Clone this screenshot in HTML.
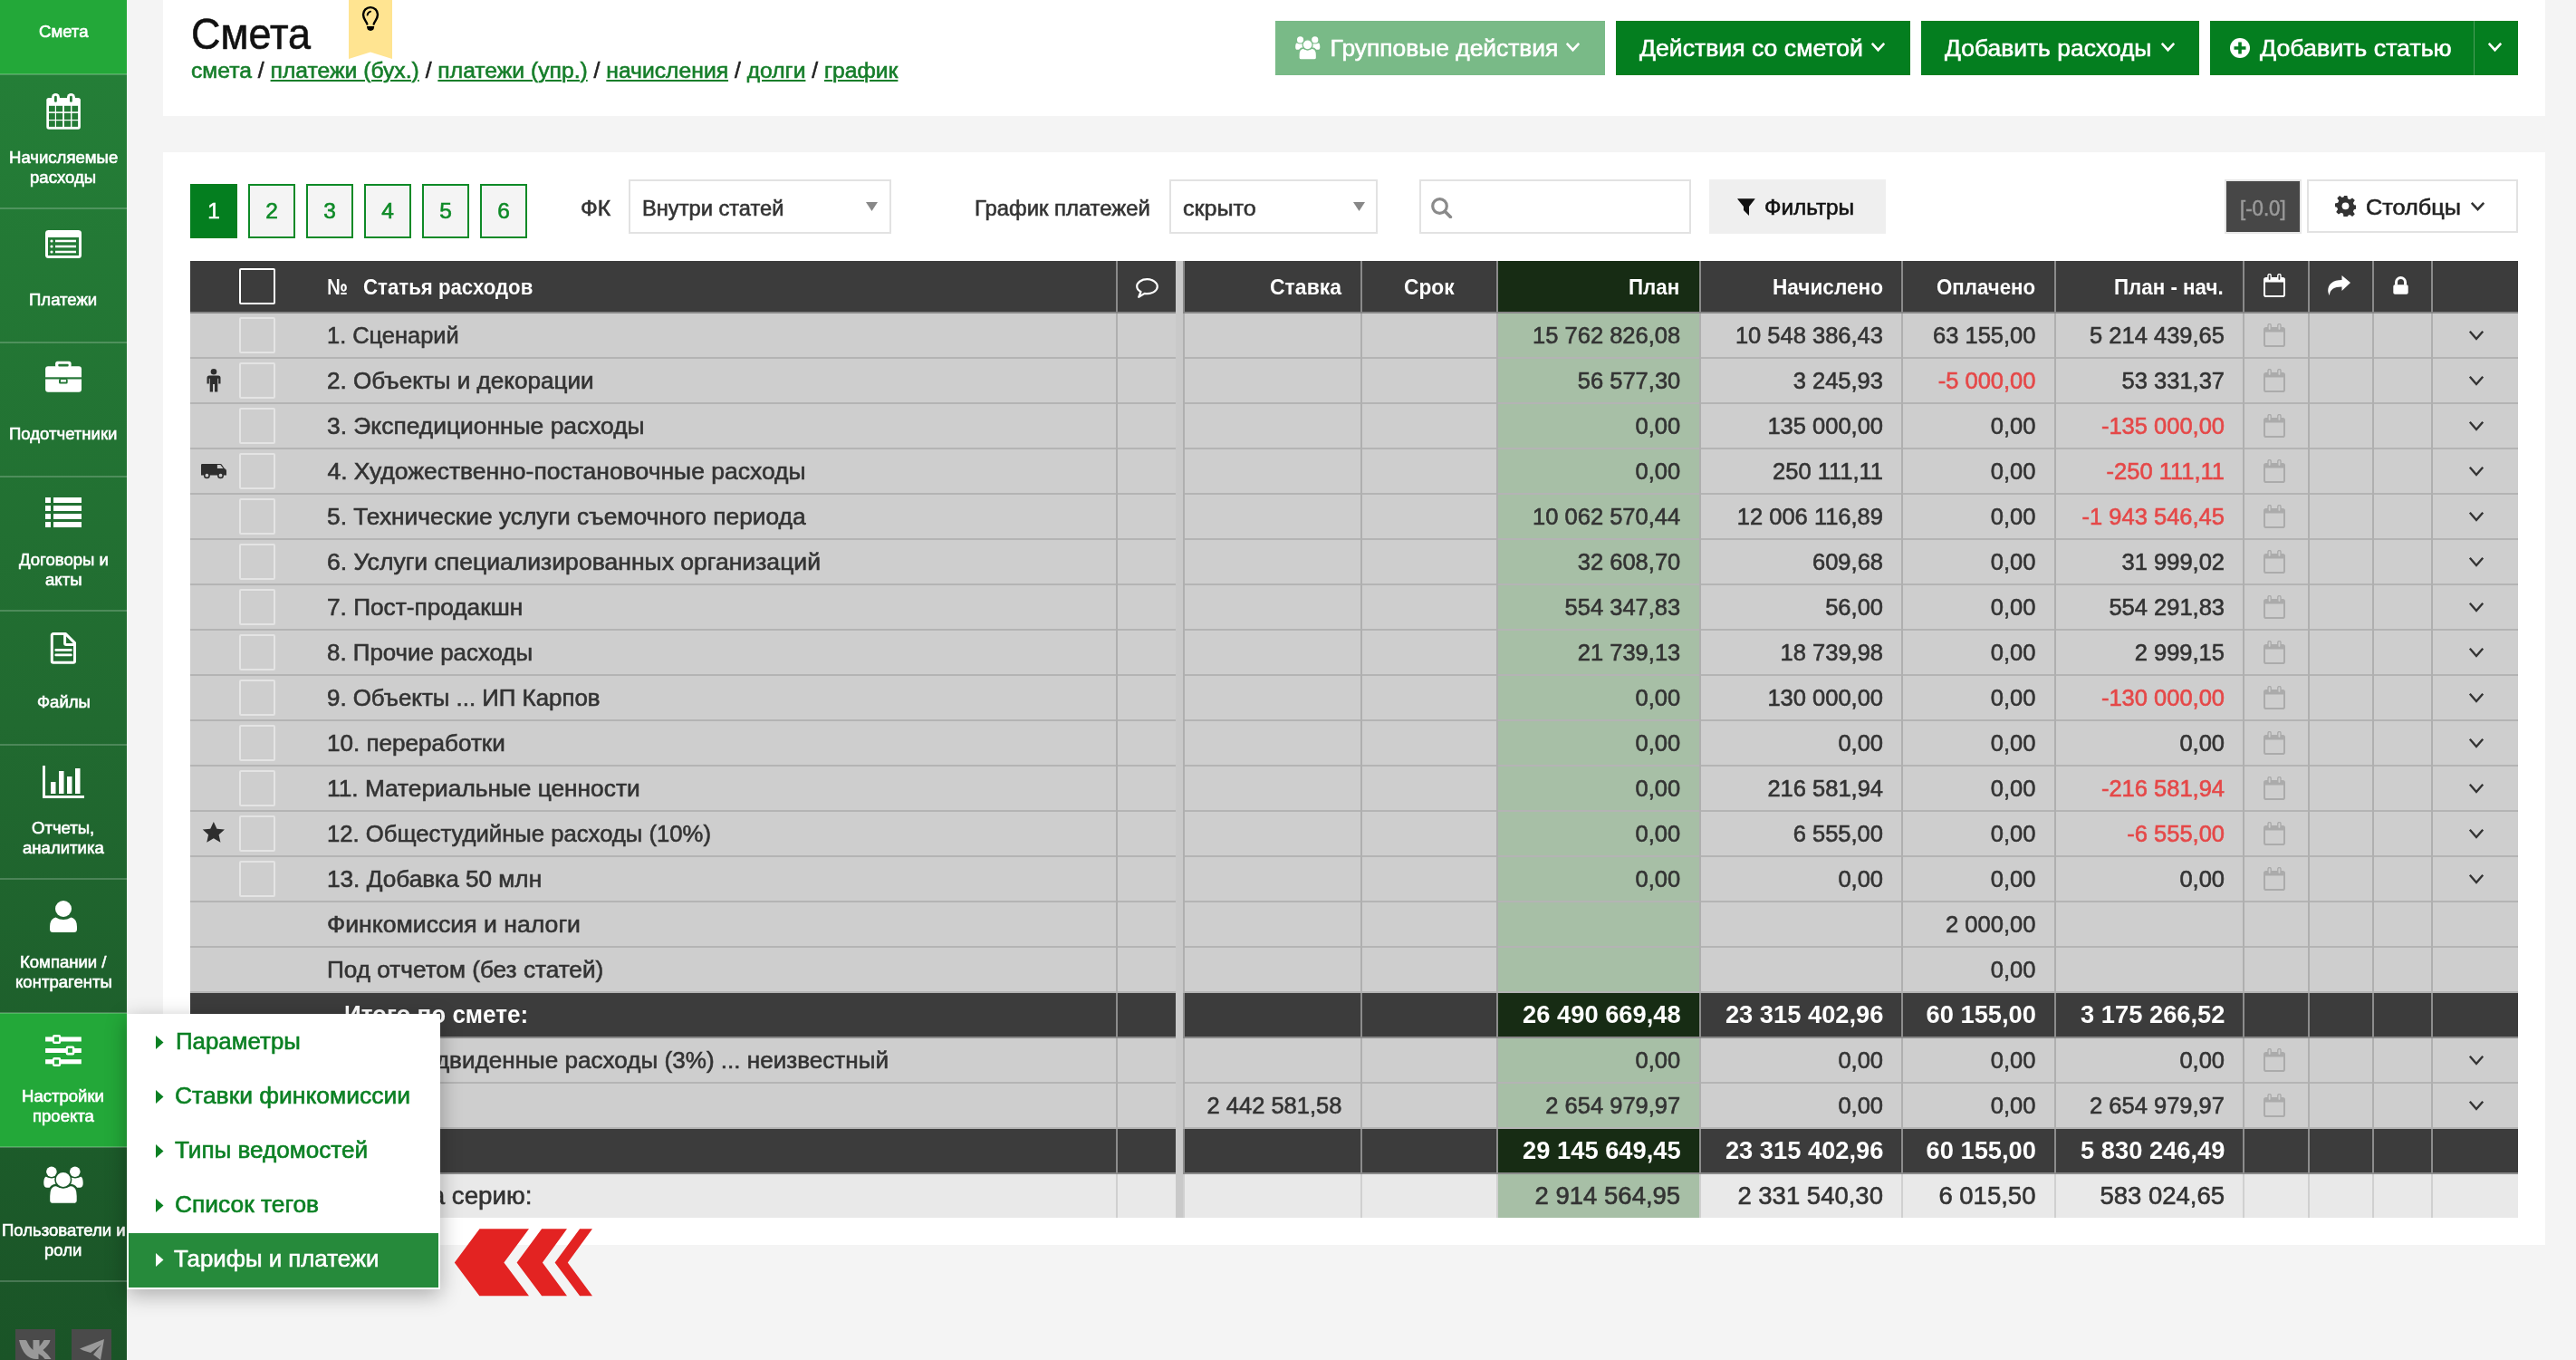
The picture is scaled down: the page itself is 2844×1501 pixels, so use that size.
<!DOCTYPE html>
<html><head><meta charset="utf-8">
<style>
*{margin:0;padding:0;box-sizing:border-box}
html,body{width:2844px;height:1501px;overflow:hidden;background:#f4f4f4;font-family:"Liberation Sans",sans-serif;color:#333}
.t{position:absolute;white-space:nowrap;line-height:60px;transform-origin:0 0;-webkit-text-stroke:0.6px currentColor}
#wrap{position:absolute;left:0;top:0;width:2844px;height:1501px;will-change:transform}
.r{position:absolute}
svg{position:absolute;display:block}
#sb .t{color:#fff;-webkit-text-stroke:0.6px #fff}
.u{text-decoration:underline;text-decoration-thickness:2px;text-underline-offset:2px}
</style></head><body><div id="wrap">

<div class="r" style="left:0;top:0;width:140px;height:1501px;background:linear-gradient(#247e37 82px,#216a30 800px,#1a5427 1501px)"></div>
<div class="r" style="left:0;top:0;width:140px;height:82px;background:#23a839"></div>
<div class="r" style="left:0;top:1118px;width:140px;height:148px;background:#23a839"></div>
<div class="r" style="left:0;top:81px;width:140px;height:2px;background:rgba(255,255,255,0.2)"></div>
<div class="r" style="left:0;top:229px;width:140px;height:2px;background:rgba(255,255,255,0.2)"></div>
<div class="r" style="left:0;top:377px;width:140px;height:2px;background:rgba(255,255,255,0.2)"></div>
<div class="r" style="left:0;top:525px;width:140px;height:2px;background:rgba(255,255,255,0.2)"></div>
<div class="r" style="left:0;top:673px;width:140px;height:2px;background:rgba(255,255,255,0.2)"></div>
<div class="r" style="left:0;top:821px;width:140px;height:2px;background:rgba(255,255,255,0.2)"></div>
<div class="r" style="left:0;top:969px;width:140px;height:2px;background:rgba(255,255,255,0.2)"></div>
<div class="r" style="left:0;top:1117px;width:140px;height:2px;background:rgba(255,255,255,0.2)"></div>
<div class="r" style="left:0;top:1265px;width:140px;height:2px;background:rgba(255,255,255,0.2)"></div>
<div class="r" style="left:0;top:1413px;width:140px;height:2px;background:rgba(255,255,255,0.2)"></div>
<div id="sb">
<div class="t" style="left:42.75px;top:4.80px;font-size:18.2px;transform:scaleX(1.0200);">Смета</div>
<div class="t" style="left:9.86px;top:143.60px;font-size:18.2px;transform:scaleX(1.0200);">Начисляемые</div>
<div class="t" style="left:33.45px;top:165.50px;font-size:18.2px;transform:scaleX(1.0200);">расходы</div>
<div class="t" style="left:32.35px;top:301.40px;font-size:18.2px;transform:scaleX(1.0200);">Платежи</div>
<div class="t" style="left:10.25px;top:449.40px;font-size:18.2px;transform:scaleX(1.0200);">Подотчетники</div>
<div class="t" style="left:20.52px;top:587.60px;font-size:18.2px;transform:scaleX(1.0200);">Договоры и</div>
<div class="t" style="left:49.75px;top:609.50px;font-size:18.2px;transform:scaleX(1.0200);">акты</div>
<div class="t" style="left:40.51px;top:745.40px;font-size:18.2px;transform:scaleX(1.0200);">Файлы</div>
<div class="t" style="left:35.34px;top:883.60px;font-size:18.2px;transform:scaleX(1.0200);">Отчеты,</div>
<div class="t" style="left:25.08px;top:905.50px;font-size:18.2px;transform:scaleX(1.0200);">аналитика</div>
<div class="t" style="left:22.21px;top:1031.60px;font-size:18.2px;transform:scaleX(1.0200);">Компании /</div>
<div class="t" style="left:16.58px;top:1053.50px;font-size:18.2px;transform:scaleX(1.0200);">контрагенты</div>
<div class="t" style="left:24.49px;top:1179.60px;font-size:18.2px;transform:scaleX(1.0200);">Настройки</div>
<div class="t" style="left:36.01px;top:1201.50px;font-size:18.2px;transform:scaleX(1.0200);">проекта</div>
<div class="t" style="left:1.65px;top:1327.60px;font-size:18.2px;transform:scaleX(1.0200);">Пользователи и</div>
<div class="t" style="left:49.28px;top:1349.50px;font-size:18.2px;transform:scaleX(1.0200);">роли</div>
</div>
<svg style="left:51px;top:103px" width="38" height="40" viewBox="0 0 38 40"><rect x="0.3" y="4.9" width="37.6" height="34.8" rx="2.6" fill="#fff"/><rect x="6" y="0" width="8.9" height="12" rx="4.45" fill="#fff"/><rect x="23" y="0" width="8.9" height="12" rx="4.45" fill="#fff"/><rect x="9" y="2.7" width="2.8" height="7.1" rx="1.4" fill="#247b36"/><rect x="26" y="2.7" width="2.8" height="7.1" rx="1.4" fill="#247b36"/><rect x="3" y="13.8" width="6.8" height="6.5" fill="#247b36"/><rect x="11" y="13.8" width="7.1" height="6.5" fill="#247b36"/><rect x="19.9" y="13.8" width="7.1" height="6.5" fill="#247b36"/><rect x="28.4" y="13.8" width="6.7" height="6.5" fill="#247b36"/><rect x="3" y="21.9" width="6.8" height="7.1" fill="#247b36"/><rect x="11" y="21.9" width="7.1" height="7.1" fill="#247b36"/><rect x="19.9" y="21.9" width="7.1" height="7.1" fill="#247b36"/><rect x="28.4" y="21.9" width="6.7" height="7.1" fill="#247b36"/><rect x="3" y="30.2" width="6.8" height="6.7" fill="#247b36"/><rect x="11" y="30.2" width="7.1" height="6.7" fill="#247b36"/><rect x="19.9" y="30.2" width="7.1" height="6.7" fill="#247b36"/><rect x="28.4" y="30.2" width="6.7" height="6.7" fill="#247b36"/></svg>
<svg style="left:50px;top:254px" width="40" height="31" viewBox="0 0 40 31"><rect x="0" y="0" width="40" height="31" rx="3.5" fill="#fff"/><rect x="3" y="8" width="34" height="20" fill="#247a36"/><circle cx="7" cy="12" r="1.6" fill="#fff"/><circle cx="7" cy="18" r="1.6" fill="#fff"/><circle cx="7" cy="24" r="1.6" fill="#fff"/><path d="M11 12h23M11 18h23M11 24h23" stroke="#fff" stroke-width="2.6"/></svg>
<svg style="left:50px;top:398px" width="41" height="36" viewBox="0 0 41 36"><rect x="0.1" y="6.2" width="39.9" height="28.6" rx="3" fill="#fff"/><rect x="11.1" y="0.8" width="17.5" height="7" rx="2.5" fill="#fff"/><rect x="14.3" y="3.8" width="11.4" height="2.6" rx="1" fill="#247636"/><rect x="0" y="18.3" width="40.2" height="2.2" fill="#247636"/><rect x="15" y="19.9" width="9.7" height="5.7" rx="1.5" fill="#247636"/><rect x="17" y="21" width="5.9" height="2.6" fill="#fff"/></svg>
<svg style="left:50px;top:549px" width="40" height="33" viewBox="0 0 40 33"><path d="M0 0h6v6H0zM9 0h31v6H9zM0 9h6v6H0zM9 9h31v6H9zM0 18h6v6H0zM9 18h31v6H9zM0 27h6v6H0zM9 27h31v6H9z" fill="#fff"/></svg>
<svg style="left:55px;top:698px" width="30" height="36" viewBox="0 0 30 36"><path d="M3.8 1.6H17.5L27.5 11.6V31.8Q27.5 33.3 26 33.3H3.8Q2.3 33.3 2.3 31.8V3.1Q2.3 1.6 3.8 1.6z" fill="none" stroke="#fff" stroke-width="3" stroke-linejoin="round"/><path d="M16.6 1.6V12Q16.6 13.5 18.1 13.5H27.5" fill="none" stroke="#fff" stroke-width="3" stroke-linejoin="round"/><path d="M6.7 19.4H23.4M6.7 24.9H23.4" stroke="#fff" stroke-width="2.7" stroke-linecap="round"/></svg>
<svg style="left:47px;top:845px" width="47" height="36" viewBox="0 0 47 36"><path d="M1.5 0v34.5H46" fill="none" stroke="#fff" stroke-width="3"/><rect x="9" y="18" width="5.5" height="13" fill="#fff"/><rect x="18" y="6" width="5.5" height="25" fill="#fff"/><rect x="27" y="12" width="5.5" height="19" fill="#fff"/><rect x="36" y="3" width="5.5" height="28" fill="#fff"/></svg>
<svg style="left:55px;top:994px" width="30" height="35" viewBox="0 0 30 35"><circle cx="15" cy="9" r="9" fill="#fff"/><path d="M0 29q0-9 6.5-10.5q8.5 5 17 0Q30 20 30 29v2.5q0 3.5-3.5 3.5h-23Q0 35 0 31.5z" fill="#fff"/></svg>
<svg style="left:49px;top:1142px" width="42" height="36" viewBox="0 0 42 36"><rect x="1.1" y="2.4" width="39.7" height="5.1" fill="#fff"/><rect x="1.1" y="15" width="39.7" height="5" fill="#fff"/><rect x="1.1" y="27.2" width="39.7" height="5.1" fill="#fff"/><rect x="9" y="0" width="9.2" height="9.9" rx="2" fill="#fff"/><rect x="11" y="2.6" width="5" height="4.9" fill="#23a839"/><rect x="23.7" y="12.5" width="9.6" height="9.9" rx="2" fill="#fff"/><rect x="25.9" y="15" width="5" height="4.8" fill="#23a839"/><rect x="9" y="25" width="9.2" height="9.9" rx="2" fill="#fff"/><rect x="11" y="27.6" width="5" height="4.9" fill="#23a839"/></svg>
<svg style="left:48px;top:1287px" width="44" height="42" viewBox="0 0 44 42"><circle cx="8.9" cy="6.2" r="5.75" fill="#fff"/><circle cx="34.8" cy="6.2" r="5.75" fill="#fff"/><path d="M0.3 19C0.3 14 1.5 11.8 3 11.8C5 13 7 13.5 9 13.5C11 13.5 13 13 15 11.8L16 23.7H4C1.5 23.7 0.3 22 0.3 19z" fill="#fff"/><path d="M43.7 19C43.7 14 42.5 11.8 41 11.8C39 13 37 13.5 35 13.5C33 13.5 31 13 29 11.8L28 23.7H40C42.5 23.7 43.7 22 43.7 19z" fill="#fff"/><path d="M6 33C6 25 9 21 14 20.9C17 22.5 19.5 23.3 21.8 23.3C24.1 23.3 26.6 22.5 29.6 20.9C34.6 21 37.9 25 37.9 33V37.9C37.9 40.2 36 41.9 33.5 41.9H10.4C8 41.9 6 40.2 6 37.9z" fill="#fff" stroke="#1c5a2a" stroke-width="2.4"/><circle cx="21.8" cy="14.9" r="8.8" fill="#fff" stroke="#1c5a2a" stroke-width="1.6"/></svg>
<div class="r" style="left:17px;top:1467px;width:44px;height:40px;background:#4a4a4a"></div>
<div class="r" style="left:79px;top:1467px;width:44px;height:40px;background:#4a4a4a"></div>
<svg style="left:20px;top:1478px" width="38" height="23" viewBox="0 0 38 23"><path d="M1 1h7q1 0 1.5 1q3 7 7 10V1h7v7q2-2 5-7h7q-1 5-8 11q6 5 9 10h-7q-3-4-7-6v6h-2Q6 22 1 1z" fill="#999"/></svg>
<svg style="left:88px;top:1477px" width="28" height="24" viewBox="0 0 28 24"><path d="M0 11.5L27 1l-4 23-8-6 9-11-12 9-8-2.5z" fill="#999"/></svg>
<div class="r" style="left:180px;top:0;width:2630px;height:128px;background:#fff"></div>
<div class="t" style="left:211.00px;top:8.30px;font-size:48px;color:#111;transform:scaleX(0.9368);">Смета</div>
<svg style="left:385px;top:0" width="48" height="65" viewBox="0 0 48 65"><path d="M0 0h48v65l-24-7.5L0 65z" fill="#ffe491"/><path d="M20.3 26.6C19.8 23.6 16 21.2 16 16.1A8 8 0 1 1 32 16.1C32 21.2 28.2 23.6 27.7 26.6" fill="none" stroke="#000" stroke-width="2.4" stroke-linecap="round"/><path d="M20.6 16.6q.5-3 3.5-3.9" fill="none" stroke="#000" stroke-width="1.9" stroke-linecap="round"/><path d="M20 29.1h8.2q0 4.9-4.1 4.9t-4.1-4.9z" fill="#000"/></svg>
<div class="t" style="left:211.00px;top:48.00px;font-size:24.7px;color:#222;"><span style="color:#167e2a">смета</span> / <span class="u" style="color:#167e2a">платежи (бух.)</span> / <span class="u" style="color:#167e2a">платежи (упр.)</span> / <span class="u" style="color:#167e2a">начисления</span> / <span class="u" style="color:#167e2a">долги</span> / <span class="u" style="color:#167e2a">график</span></div>
<div class="r" style="left:1408px;top:23px;width:364px;height:60px;background:#79ba87"></div>
<svg style="left:1430px;top:40px" width="27.5" height="26.3" viewBox="0 0 44 42"><circle cx="8.9" cy="6.2" r="5.75" fill="#fff"/><circle cx="34.8" cy="6.2" r="5.75" fill="#fff"/><path d="M0.3 19C0.3 14 1.5 11.8 3 11.8C5 13 7 13.5 9 13.5C11 13.5 13 13 15 11.8L16 23.7H4C1.5 23.7 0.3 22 0.3 19z" fill="#fff"/><path d="M43.7 19C43.7 14 42.5 11.8 41 11.8C39 13 37 13.5 35 13.5C33 13.5 31 13 29 11.8L28 23.7H40C42.5 23.7 43.7 22 43.7 19z" fill="#fff"/><path d="M6 33C6 25 9 21 14 20.9C17 22.5 19.5 23.3 21.8 23.3C24.1 23.3 26.6 22.5 29.6 20.9C34.6 21 37.9 25 37.9 33V37.9C37.9 40.2 36 41.9 33.5 41.9H10.4C8 41.9 6 40.2 6 37.9z" fill="#fff" stroke="#79ba87" stroke-width="2.8"/><circle cx="21.8" cy="14.9" r="8.8" fill="#fff" stroke="#79ba87" stroke-width="2"/></svg>
<div class="t" style="left:1468.60px;top:22.70px;font-size:26.4px;color:#fff;">Групповые действия</div>
<svg style="left:1727px;top:45px" width="19" height="13" viewBox="-2 -2 19 13"><path d="M0.8 0.8L7.5 8.2L14.2 0.8" fill="none" stroke="#fff" stroke-width="2.6"/></svg>
<div class="r" style="left:1784px;top:23px;width:325px;height:60px;background:#047e1f"></div>
<div class="t" style="left:1810.00px;top:22.70px;font-size:26.4px;color:#fff;transform:scaleX(1.0086);">Действия со сметой</div>
<svg style="left:2064.4px;top:44.5px" width="19" height="13" viewBox="-2 -2 19 13"><path d="M0.8 0.8L7.5 8.2L14.2 0.8" fill="none" stroke="#fff" stroke-width="2.6"/></svg>
<div class="r" style="left:2121px;top:23px;width:307px;height:60px;background:#047e1f"></div>
<div class="t" style="left:2146.80px;top:22.70px;font-size:26.4px;color:#fff;transform:scaleX(1.0022);">Добавить расходы</div>
<svg style="left:2383.5px;top:44.5px" width="19" height="13" viewBox="-2 -2 19 13"><path d="M0.8 0.8L7.5 8.2L14.2 0.8" fill="none" stroke="#fff" stroke-width="2.6"/></svg>
<div class="r" style="left:2440px;top:23px;width:340px;height:60px;background:#047e1f"></div>
<svg style="left:2462px;top:41.5px" width="22" height="22" viewBox="0 0 22 22"><circle cx="11" cy="11" r="11" fill="#fff"/><path d="M11 4.5v13M4.5 11h13" stroke="#047e1f" stroke-width="3.6"/></svg>
<div class="t" style="left:2494.90px;top:22.70px;font-size:26.4px;color:#fff;transform:scaleX(1.0144);">Добавить статью</div>
<div class="r" style="left:2731px;top:23px;width:1px;height:60px;background:#4d9d5c"></div>
<svg style="left:2745px;top:45px" width="19" height="13" viewBox="-2 -2 19 13"><path d="M0.8 0.8L7.5 8.2L14.2 0.8" fill="none" stroke="#fff" stroke-width="2.6"/></svg>
<div class="r" style="left:180px;top:168px;width:2630px;height:1206px;background:#fff"></div>
<div class="r" style="left:210px;top:203px;width:52px;height:60px;background:#047e1f"></div>
<div class="t" style="left:229.19px;top:202.50px;font-size:24.5px;color:#fff;">1</div>
<div class="r" style="left:274px;top:203px;width:52px;height:60px;background:#f4f4f4;border:2px solid #0e8a27"></div>
<div class="t" style="left:293.19px;top:202.50px;font-size:24.5px;color:#0e8a27;">2</div>
<div class="r" style="left:338px;top:203px;width:52px;height:60px;background:#f4f4f4;border:2px solid #0e8a27"></div>
<div class="t" style="left:357.19px;top:202.50px;font-size:24.5px;color:#0e8a27;">3</div>
<div class="r" style="left:402px;top:203px;width:52px;height:60px;background:#f4f4f4;border:2px solid #0e8a27"></div>
<div class="t" style="left:421.19px;top:202.50px;font-size:24.5px;color:#0e8a27;">4</div>
<div class="r" style="left:466px;top:203px;width:52px;height:60px;background:#f4f4f4;border:2px solid #0e8a27"></div>
<div class="t" style="left:485.19px;top:202.50px;font-size:24.5px;color:#0e8a27;">5</div>
<div class="r" style="left:530px;top:203px;width:52px;height:60px;background:#f4f4f4;border:2px solid #0e8a27"></div>
<div class="t" style="left:549.19px;top:202.50px;font-size:24.5px;color:#0e8a27;">6</div>
<div class="t" style="left:640.70px;top:200.30px;font-size:24px;color:#333;transform:scaleX(1.0280);">ФК</div>
<div class="r" style="left:694px;top:198px;width:290px;height:60px;background:#fff;border:2px solid #e2e2e2"></div>
<div class="t" style="left:709.20px;top:200.30px;font-size:24px;color:#333;transform:scaleX(0.9855);">Внутри статей</div>
<svg style="left:956px;top:223px" width="13" height="10" viewBox="0 0 13 10"><path d="M0 0h13L6.5 10z" fill="#888"/></svg>
<div class="t" style="left:1075.50px;top:199.90px;font-size:24px;color:#333;transform:scaleX(0.9933);">График платежей</div>
<div class="r" style="left:1291px;top:198px;width:230px;height:60px;background:#fff;border:2px solid #e2e2e2"></div>
<div class="t" style="left:1305.50px;top:199.50px;font-size:24px;color:#333;transform:scaleX(1.0466);">скрыто</div>
<svg style="left:1493.7px;top:223px" width="13" height="10" viewBox="0 0 13 10"><path d="M0 0h13L6.5 10z" fill="#888"/></svg>
<div class="r" style="left:1567px;top:198px;width:300px;height:60px;background:#fff;border:2px solid #e2e2e2"></div>
<svg style="left:1580px;top:218px" width="24" height="23" viewBox="0 0 24 23"><circle cx="9.5" cy="9.5" r="7.8" fill="none" stroke="#8a8a8a" stroke-width="3.2"/><path d="M15.2 15.2l6.2 6.2" stroke="#8a8a8a" stroke-width="3.6" stroke-linecap="round"/></svg>
<div class="r" style="left:1887px;top:198px;width:195px;height:60px;background:#efefef"></div>
<svg style="left:1918px;top:219px" width="20" height="19" viewBox="0 0 20 19"><path d="M0.5 0.3h18.8a.3.3 0 0 1 .2.5L13 9v10L7 13V9L.3.8a.3.3 0 0 1 .2-.5z" fill="#111"/></svg>
<div class="t" style="left:1948.30px;top:198.50px;font-size:24px;color:#111;transform:scaleX(1.0123);">Фильтры</div>
<div class="r" style="left:2456px;top:198px;width:85px;height:60px;background:#474747;border:2px solid #e6e6e6"></div>
<div class="t" style="left:2472.70px;top:199.90px;font-size:24px;color:#9a9a9a;transform:scaleX(0.9250);">[-0.0]</div>
<div class="r" style="left:2547px;top:198px;width:233px;height:59px;background:#fff;border:2px solid #e2e2e2"></div>
<svg style="left:2578px;top:216px" width="23" height="23" viewBox="0 0 23 23"><path d="M9.6 0h3.8l.6 3.3 2.3 1 2.8-1.9 2.7 2.7-1.9 2.8 1 2.3 3.3.6v3.8l-3.3.6-1 2.3 1.9 2.8-2.7 2.7-2.8-1.9-2.3 1-.6 3.3H9.6L9 19.7l-2.3-1-2.8 1.9-2.7-2.7 1.9-2.8-1-2.3L-.1 12.2V8.4l3.3-.6 1-2.3-1.9-2.8 2.7-2.7 2.8 1.9 2.3-1z" fill="#333"/><circle cx="11.5" cy="11.3" r="3.9" fill="#fff"/></svg>
<div class="t" style="left:2612.40px;top:199.20px;font-size:24px;color:#222;transform:scaleX(1.0532);">Столбцы</div>
<svg style="left:2725.5px;top:220.5px" width="19" height="13" viewBox="-2 -2 19 13"><path d="M0.8 0.8L7.5 8.2L14.2 0.8" fill="none" stroke="#333" stroke-width="2.5"/></svg>
<div class="r" style="left:210px;top:288px;width:2570px;height:56px;background:#3c3c3c"></div>
<div class="r" style="left:210px;top:344px;width:2570px;height:2px;background:#878787"></div>
<div class="r" style="left:1654px;top:288px;width:222px;height:56px;background:#172c14"></div>
<div class="r" style="left:264px;top:296px;width:40px;height:40px;border:2px solid #fff;border-radius:2px"></div>
<div class="t" style="left:361.30px;top:286.80px;font-size:24.5px;font-weight:bold;-webkit-text-stroke:0;color:#fff;transform:scaleX(0.8315);">№</div>
<div class="t" style="left:401.00px;top:286.80px;font-size:24.5px;font-weight:bold;-webkit-text-stroke:0;color:#fff;transform:scaleX(0.9066);">Статья расходов</div>
<div class="t" style="left:1402.30px;top:287.10px;font-size:24.5px;font-weight:bold;-webkit-text-stroke:0;color:#fff;transform:scaleX(0.9384);">Ставка</div>
<div class="t" style="left:1550.40px;top:287.10px;font-size:24.5px;font-weight:bold;-webkit-text-stroke:0;color:#fff;transform:scaleX(0.9299);">Срок</div>
<div class="t" style="left:1798.30px;top:287.10px;font-size:24.5px;font-weight:bold;-webkit-text-stroke:0;color:#fff;transform:scaleX(0.9140);">План</div>
<div class="t" style="left:1956.80px;top:287.10px;font-size:24.5px;font-weight:bold;-webkit-text-stroke:0;color:#fff;transform:scaleX(0.9228);">Начислено</div>
<div class="t" style="left:2138.10px;top:287.10px;font-size:24.5px;font-weight:bold;-webkit-text-stroke:0;color:#fff;transform:scaleX(0.9083);">Оплачено</div>
<div class="t" style="left:2334.10px;top:287.10px;font-size:24.5px;font-weight:bold;-webkit-text-stroke:0;color:#fff;transform:scaleX(0.9123);">План - нач.</div>
<svg style="left:1254px;top:306.5px" width="25" height="22" viewBox="0 0 25 22"><path d="M12.5 1.2C6.3 1.2 1.2 4.7 1.2 9c0 2.5 1.7 4.6 4.3 6L3.2 20.8l6.5-3.9c.9.2 1.8.2 2.8.2 6.2 0 11.3-3.5 11.3-7.9S18.7 1.2 12.5 1.2z" fill="none" stroke="#fff" stroke-width="2.2" stroke-linejoin="round"/></svg>
<svg style="left:2499px;top:301.8px" width="24" height="26" viewBox="0 0 24 26"><rect x="1" y="5" width="22" height="20" rx="1.8" fill="none" stroke="#fff" stroke-width="2"/><rect x="1" y="5" width="22" height="4.5" fill="#fff"/><rect x="5" y="0.5" width="3.2" height="7" rx="1.6" fill="#3c3c3c" stroke="#fff" stroke-width="1.4"/><rect x="15.8" y="0.5" width="3.2" height="7" rx="1.6" fill="#3c3c3c" stroke="#fff" stroke-width="1.4"/></svg>
<svg style="left:2570px;top:304px" width="25" height="22" viewBox="0 0 25 22"><path d="M25 8L15.5 0v5C5.5 5 .5 9.5.2 16.5c0 2 .6 3.8 1.7 5.5 .3-6.5 5-9.5 13.6-9.5v4.5z" fill="#fff"/></svg>
<svg style="left:2642px;top:305px" width="17" height="20" viewBox="0 0 17 20"><path d="M3.5 9.5V6.5a5 5 0 0 1 10 0v3" fill="none" stroke="#fff" stroke-width="3"/><rect x="0.3" y="9.2" width="16.4" height="10.5" rx="1.8" fill="#fff"/></svg>
<div class="r" style="left:1232px;top:288px;width:2px;height:56px;background:#8a8a8a"></div>
<div class="r" style="left:1306px;top:288px;width:2px;height:56px;background:#8a8a8a"></div>
<div class="r" style="left:1502px;top:288px;width:2px;height:56px;background:#8a8a8a"></div>
<div class="r" style="left:1652px;top:288px;width:2px;height:56px;background:#8a8a8a"></div>
<div class="r" style="left:1876px;top:288px;width:2px;height:56px;background:#8a8a8a"></div>
<div class="r" style="left:2099px;top:288px;width:2px;height:56px;background:#8a8a8a"></div>
<div class="r" style="left:2268px;top:288px;width:2px;height:56px;background:#8a8a8a"></div>
<div class="r" style="left:2476px;top:288px;width:2px;height:56px;background:#8a8a8a"></div>
<div class="r" style="left:2548px;top:288px;width:2px;height:56px;background:#8a8a8a"></div>
<div class="r" style="left:2619px;top:288px;width:2px;height:56px;background:#8a8a8a"></div>
<div class="r" style="left:2684px;top:288px;width:2px;height:56px;background:#8a8a8a"></div>
<div class="r" style="left:210px;top:346px;width:2570px;height:48px;background:#cecece"></div>
<div class="r" style="left:210px;top:394px;width:2570px;height:2px;background:#b4b4b4"></div>
<div class="r" style="left:1654px;top:346px;width:222px;height:48px;background:#a7bfa6"></div>
<div class="r" style="left:1232px;top:346px;width:2px;height:50px;background:#afafaf"></div>
<div class="r" style="left:1306px;top:346px;width:2px;height:50px;background:#afafaf"></div>
<div class="r" style="left:1502px;top:346px;width:2px;height:50px;background:#afafaf"></div>
<div class="r" style="left:1652px;top:346px;width:2px;height:50px;background:#afafaf"></div>
<div class="r" style="left:1876px;top:346px;width:2px;height:50px;background:#afafaf"></div>
<div class="r" style="left:2099px;top:346px;width:2px;height:50px;background:#afafaf"></div>
<div class="r" style="left:2268px;top:346px;width:2px;height:50px;background:#afafaf"></div>
<div class="r" style="left:2476px;top:346px;width:2px;height:50px;background:#afafaf"></div>
<div class="r" style="left:2548px;top:346px;width:2px;height:50px;background:#afafaf"></div>
<div class="r" style="left:2619px;top:346px;width:2px;height:50px;background:#afafaf"></div>
<div class="r" style="left:2684px;top:346px;width:2px;height:50px;background:#afafaf"></div>
<div class="r" style="left:264px;top:350px;width:40px;height:40px;border:2px solid #e4e4e4;border-radius:2px"></div>
<div class="t" style="left:361.40px;top:340.30px;font-size:26.5px;color:#333;transform:scaleX(0.9585);">1. Сценарий</div>
<div class="t" style="left:1692.10px;top:340.30px;font-size:25.5px;color:#333;">15 762 826,08</div>
<div class="t" style="left:1915.90px;top:340.30px;font-size:25.5px;color:#333;">10 548 386,43</div>
<div class="t" style="left:2134.00px;top:340.30px;font-size:25.5px;color:#333;">63 155,00</div>
<div class="t" style="left:2307.10px;top:340.30px;font-size:25.5px;color:#333;">5 214 439,65</div>
<svg style="left:2499px;top:357px" width="24" height="26" viewBox="0 0 24 26"><rect x="1" y="5" width="22" height="20" rx="1.8" fill="none" stroke="#ababab" stroke-width="2"/><rect x="1" y="5" width="22" height="4.5" fill="#ababab"/><rect x="5" y="0.5" width="3.2" height="7" rx="1.6" fill="#cecece" stroke="#ababab" stroke-width="1.4"/><rect x="15.8" y="0.5" width="3.2" height="7" rx="1.6" fill="#cecece" stroke="#ababab" stroke-width="1.4"/></svg>
<svg style="left:2723.8px;top:362.5px" width="20" height="13.8" viewBox="-2 -2 20 13.8"><path d="M0.8 0.8L8.0 9.0L15.2 0.8" fill="none" stroke="#333" stroke-width="2.4"/></svg>
<div class="r" style="left:210px;top:396px;width:2570px;height:48px;background:#cecece"></div>
<div class="r" style="left:210px;top:444px;width:2570px;height:2px;background:#b4b4b4"></div>
<div class="r" style="left:1654px;top:396px;width:222px;height:48px;background:#a7bfa6"></div>
<div class="r" style="left:1232px;top:396px;width:2px;height:50px;background:#afafaf"></div>
<div class="r" style="left:1306px;top:396px;width:2px;height:50px;background:#afafaf"></div>
<div class="r" style="left:1502px;top:396px;width:2px;height:50px;background:#afafaf"></div>
<div class="r" style="left:1652px;top:396px;width:2px;height:50px;background:#afafaf"></div>
<div class="r" style="left:1876px;top:396px;width:2px;height:50px;background:#afafaf"></div>
<div class="r" style="left:2099px;top:396px;width:2px;height:50px;background:#afafaf"></div>
<div class="r" style="left:2268px;top:396px;width:2px;height:50px;background:#afafaf"></div>
<div class="r" style="left:2476px;top:396px;width:2px;height:50px;background:#afafaf"></div>
<div class="r" style="left:2548px;top:396px;width:2px;height:50px;background:#afafaf"></div>
<div class="r" style="left:2619px;top:396px;width:2px;height:50px;background:#afafaf"></div>
<div class="r" style="left:2684px;top:396px;width:2px;height:50px;background:#afafaf"></div>
<svg style="left:228px;top:407px" width="16" height="26" viewBox="0 0 16 26"><circle cx="8" cy="3.3" r="3.3" fill="#2e2e2e"/><path d="M3 7.5h10q2.5 0 2.5 2.5v6.5h-2.3V10.8h-.9v14.7H9v-8.5H7v8.5H3.7V10.8h-.9v5.7H.5V10Q.5 7.5 3 7.5z" fill="#2e2e2e"/></svg>
<div class="r" style="left:264px;top:400px;width:40px;height:40px;border:2px solid #e4e4e4;border-radius:2px"></div>
<div class="t" style="left:361.40px;top:390.30px;font-size:26.5px;color:#333;transform:scaleX(0.9840);">2. Объекты и декорации</div>
<div class="t" style="left:1741.80px;top:390.30px;font-size:25.5px;color:#333;">56 577,30</div>
<div class="t" style="left:1979.70px;top:390.30px;font-size:25.5px;color:#333;">3 245,93</div>
<div class="t" style="left:2139.70px;top:390.30px;font-size:25.5px;color:#e54848;">-5 000,00</div>
<div class="t" style="left:2342.60px;top:390.30px;font-size:25.5px;color:#333;">53 331,37</div>
<svg style="left:2499px;top:407px" width="24" height="26" viewBox="0 0 24 26"><rect x="1" y="5" width="22" height="20" rx="1.8" fill="none" stroke="#ababab" stroke-width="2"/><rect x="1" y="5" width="22" height="4.5" fill="#ababab"/><rect x="5" y="0.5" width="3.2" height="7" rx="1.6" fill="#cecece" stroke="#ababab" stroke-width="1.4"/><rect x="15.8" y="0.5" width="3.2" height="7" rx="1.6" fill="#cecece" stroke="#ababab" stroke-width="1.4"/></svg>
<svg style="left:2723.8px;top:412.5px" width="20" height="13.8" viewBox="-2 -2 20 13.8"><path d="M0.8 0.8L8.0 9.0L15.2 0.8" fill="none" stroke="#333" stroke-width="2.4"/></svg>
<div class="r" style="left:210px;top:446px;width:2570px;height:48px;background:#cecece"></div>
<div class="r" style="left:210px;top:494px;width:2570px;height:2px;background:#b4b4b4"></div>
<div class="r" style="left:1654px;top:446px;width:222px;height:48px;background:#a7bfa6"></div>
<div class="r" style="left:1232px;top:446px;width:2px;height:50px;background:#afafaf"></div>
<div class="r" style="left:1306px;top:446px;width:2px;height:50px;background:#afafaf"></div>
<div class="r" style="left:1502px;top:446px;width:2px;height:50px;background:#afafaf"></div>
<div class="r" style="left:1652px;top:446px;width:2px;height:50px;background:#afafaf"></div>
<div class="r" style="left:1876px;top:446px;width:2px;height:50px;background:#afafaf"></div>
<div class="r" style="left:2099px;top:446px;width:2px;height:50px;background:#afafaf"></div>
<div class="r" style="left:2268px;top:446px;width:2px;height:50px;background:#afafaf"></div>
<div class="r" style="left:2476px;top:446px;width:2px;height:50px;background:#afafaf"></div>
<div class="r" style="left:2548px;top:446px;width:2px;height:50px;background:#afafaf"></div>
<div class="r" style="left:2619px;top:446px;width:2px;height:50px;background:#afafaf"></div>
<div class="r" style="left:2684px;top:446px;width:2px;height:50px;background:#afafaf"></div>
<div class="r" style="left:264px;top:450px;width:40px;height:40px;border:2px solid #e4e4e4;border-radius:2px"></div>
<div class="t" style="left:361.40px;top:440.30px;font-size:26.5px;color:#333;transform:scaleX(0.9963);">3. Экспедиционные расходы</div>
<div class="t" style="left:1805.60px;top:440.30px;font-size:25.5px;color:#333;">0,00</div>
<div class="t" style="left:1951.40px;top:440.30px;font-size:25.5px;color:#333;">135 000,00</div>
<div class="t" style="left:2197.80px;top:440.30px;font-size:25.5px;color:#333;">0,00</div>
<div class="t" style="left:2319.90px;top:440.30px;font-size:25.5px;color:#e54848;">-135 000,00</div>
<svg style="left:2499px;top:457px" width="24" height="26" viewBox="0 0 24 26"><rect x="1" y="5" width="22" height="20" rx="1.8" fill="none" stroke="#ababab" stroke-width="2"/><rect x="1" y="5" width="22" height="4.5" fill="#ababab"/><rect x="5" y="0.5" width="3.2" height="7" rx="1.6" fill="#cecece" stroke="#ababab" stroke-width="1.4"/><rect x="15.8" y="0.5" width="3.2" height="7" rx="1.6" fill="#cecece" stroke="#ababab" stroke-width="1.4"/></svg>
<svg style="left:2723.8px;top:462.5px" width="20" height="13.8" viewBox="-2 -2 20 13.8"><path d="M0.8 0.8L8.0 9.0L15.2 0.8" fill="none" stroke="#333" stroke-width="2.4"/></svg>
<div class="r" style="left:210px;top:496px;width:2570px;height:48px;background:#cecece"></div>
<div class="r" style="left:210px;top:544px;width:2570px;height:2px;background:#b4b4b4"></div>
<div class="r" style="left:1654px;top:496px;width:222px;height:48px;background:#a7bfa6"></div>
<div class="r" style="left:1232px;top:496px;width:2px;height:50px;background:#afafaf"></div>
<div class="r" style="left:1306px;top:496px;width:2px;height:50px;background:#afafaf"></div>
<div class="r" style="left:1502px;top:496px;width:2px;height:50px;background:#afafaf"></div>
<div class="r" style="left:1652px;top:496px;width:2px;height:50px;background:#afafaf"></div>
<div class="r" style="left:1876px;top:496px;width:2px;height:50px;background:#afafaf"></div>
<div class="r" style="left:2099px;top:496px;width:2px;height:50px;background:#afafaf"></div>
<div class="r" style="left:2268px;top:496px;width:2px;height:50px;background:#afafaf"></div>
<div class="r" style="left:2476px;top:496px;width:2px;height:50px;background:#afafaf"></div>
<div class="r" style="left:2548px;top:496px;width:2px;height:50px;background:#afafaf"></div>
<div class="r" style="left:2619px;top:496px;width:2px;height:50px;background:#afafaf"></div>
<div class="r" style="left:2684px;top:496px;width:2px;height:50px;background:#afafaf"></div>
<svg style="left:222px;top:511px" width="29" height="18" viewBox="0 0 29 18"><path d="M0 2Q0 0.9 1.1 0.9H21.5Q22.3 0.9 22.6 1.5L25.8 6Q27.9 6.6 28 8.5V13.4H0z" fill="#2e2e2e"/><path d="M17.9 2.1H21.3L24.5 6.1H17.9z" fill="#cecece"/><circle cx="6.4" cy="13.7" r="3.5" fill="#2e2e2e"/><circle cx="6.4" cy="13.7" r="1.9" fill="#cecece"/><circle cx="21.5" cy="13.7" r="3.5" fill="#2e2e2e"/><circle cx="21.5" cy="13.7" r="1.9" fill="#cecece"/></svg>
<div class="r" style="left:264px;top:500px;width:40px;height:40px;border:2px solid #e4e4e4;border-radius:2px"></div>
<div class="t" style="left:361.40px;top:490.30px;font-size:26.5px;color:#333;">4. Художественно-постановочные расходы</div>
<div class="t" style="left:1805.60px;top:490.30px;font-size:25.5px;color:#333;">0,00</div>
<div class="t" style="left:1957.10px;top:490.30px;font-size:25.5px;color:#333;">250 111,11</div>
<div class="t" style="left:2197.80px;top:490.30px;font-size:25.5px;color:#333;">0,00</div>
<div class="t" style="left:2325.60px;top:490.30px;font-size:25.5px;color:#e54848;">-250 111,11</div>
<svg style="left:2499px;top:507px" width="24" height="26" viewBox="0 0 24 26"><rect x="1" y="5" width="22" height="20" rx="1.8" fill="none" stroke="#ababab" stroke-width="2"/><rect x="1" y="5" width="22" height="4.5" fill="#ababab"/><rect x="5" y="0.5" width="3.2" height="7" rx="1.6" fill="#cecece" stroke="#ababab" stroke-width="1.4"/><rect x="15.8" y="0.5" width="3.2" height="7" rx="1.6" fill="#cecece" stroke="#ababab" stroke-width="1.4"/></svg>
<svg style="left:2723.8px;top:512.5px" width="20" height="13.8" viewBox="-2 -2 20 13.8"><path d="M0.8 0.8L8.0 9.0L15.2 0.8" fill="none" stroke="#333" stroke-width="2.4"/></svg>
<div class="r" style="left:210px;top:546px;width:2570px;height:48px;background:#cecece"></div>
<div class="r" style="left:210px;top:594px;width:2570px;height:2px;background:#b4b4b4"></div>
<div class="r" style="left:1654px;top:546px;width:222px;height:48px;background:#a7bfa6"></div>
<div class="r" style="left:1232px;top:546px;width:2px;height:50px;background:#afafaf"></div>
<div class="r" style="left:1306px;top:546px;width:2px;height:50px;background:#afafaf"></div>
<div class="r" style="left:1502px;top:546px;width:2px;height:50px;background:#afafaf"></div>
<div class="r" style="left:1652px;top:546px;width:2px;height:50px;background:#afafaf"></div>
<div class="r" style="left:1876px;top:546px;width:2px;height:50px;background:#afafaf"></div>
<div class="r" style="left:2099px;top:546px;width:2px;height:50px;background:#afafaf"></div>
<div class="r" style="left:2268px;top:546px;width:2px;height:50px;background:#afafaf"></div>
<div class="r" style="left:2476px;top:546px;width:2px;height:50px;background:#afafaf"></div>
<div class="r" style="left:2548px;top:546px;width:2px;height:50px;background:#afafaf"></div>
<div class="r" style="left:2619px;top:546px;width:2px;height:50px;background:#afafaf"></div>
<div class="r" style="left:2684px;top:546px;width:2px;height:50px;background:#afafaf"></div>
<div class="r" style="left:264px;top:550px;width:40px;height:40px;border:2px solid #e4e4e4;border-radius:2px"></div>
<div class="t" style="left:361.40px;top:540.30px;font-size:26.5px;color:#333;transform:scaleX(0.9929);">5. Технические услуги съемочного периода</div>
<div class="t" style="left:1692.10px;top:540.30px;font-size:25.5px;color:#333;">10 062 570,44</div>
<div class="t" style="left:1917.80px;top:540.30px;font-size:25.5px;color:#333;">12 006 116,89</div>
<div class="t" style="left:2197.80px;top:540.30px;font-size:25.5px;color:#333;">0,00</div>
<div class="t" style="left:2298.60px;top:540.30px;font-size:25.5px;color:#e54848;">-1 943 546,45</div>
<svg style="left:2499px;top:557px" width="24" height="26" viewBox="0 0 24 26"><rect x="1" y="5" width="22" height="20" rx="1.8" fill="none" stroke="#ababab" stroke-width="2"/><rect x="1" y="5" width="22" height="4.5" fill="#ababab"/><rect x="5" y="0.5" width="3.2" height="7" rx="1.6" fill="#cecece" stroke="#ababab" stroke-width="1.4"/><rect x="15.8" y="0.5" width="3.2" height="7" rx="1.6" fill="#cecece" stroke="#ababab" stroke-width="1.4"/></svg>
<svg style="left:2723.8px;top:562.5px" width="20" height="13.8" viewBox="-2 -2 20 13.8"><path d="M0.8 0.8L8.0 9.0L15.2 0.8" fill="none" stroke="#333" stroke-width="2.4"/></svg>
<div class="r" style="left:210px;top:596px;width:2570px;height:48px;background:#cecece"></div>
<div class="r" style="left:210px;top:644px;width:2570px;height:2px;background:#b4b4b4"></div>
<div class="r" style="left:1654px;top:596px;width:222px;height:48px;background:#a7bfa6"></div>
<div class="r" style="left:1232px;top:596px;width:2px;height:50px;background:#afafaf"></div>
<div class="r" style="left:1306px;top:596px;width:2px;height:50px;background:#afafaf"></div>
<div class="r" style="left:1502px;top:596px;width:2px;height:50px;background:#afafaf"></div>
<div class="r" style="left:1652px;top:596px;width:2px;height:50px;background:#afafaf"></div>
<div class="r" style="left:1876px;top:596px;width:2px;height:50px;background:#afafaf"></div>
<div class="r" style="left:2099px;top:596px;width:2px;height:50px;background:#afafaf"></div>
<div class="r" style="left:2268px;top:596px;width:2px;height:50px;background:#afafaf"></div>
<div class="r" style="left:2476px;top:596px;width:2px;height:50px;background:#afafaf"></div>
<div class="r" style="left:2548px;top:596px;width:2px;height:50px;background:#afafaf"></div>
<div class="r" style="left:2619px;top:596px;width:2px;height:50px;background:#afafaf"></div>
<div class="r" style="left:2684px;top:596px;width:2px;height:50px;background:#afafaf"></div>
<div class="r" style="left:264px;top:600px;width:40px;height:40px;border:2px solid #e4e4e4;border-radius:2px"></div>
<div class="t" style="left:361.40px;top:590.30px;font-size:26.5px;color:#333;transform:scaleX(1.0020);">6. Услуги специализированных организаций</div>
<div class="t" style="left:1741.80px;top:590.30px;font-size:25.5px;color:#333;">32 608,70</div>
<div class="t" style="left:2001.00px;top:590.30px;font-size:25.5px;color:#333;">609,68</div>
<div class="t" style="left:2197.80px;top:590.30px;font-size:25.5px;color:#333;">0,00</div>
<div class="t" style="left:2342.60px;top:590.30px;font-size:25.5px;color:#333;">31 999,02</div>
<svg style="left:2499px;top:607px" width="24" height="26" viewBox="0 0 24 26"><rect x="1" y="5" width="22" height="20" rx="1.8" fill="none" stroke="#ababab" stroke-width="2"/><rect x="1" y="5" width="22" height="4.5" fill="#ababab"/><rect x="5" y="0.5" width="3.2" height="7" rx="1.6" fill="#cecece" stroke="#ababab" stroke-width="1.4"/><rect x="15.8" y="0.5" width="3.2" height="7" rx="1.6" fill="#cecece" stroke="#ababab" stroke-width="1.4"/></svg>
<svg style="left:2723.8px;top:612.5px" width="20" height="13.8" viewBox="-2 -2 20 13.8"><path d="M0.8 0.8L8.0 9.0L15.2 0.8" fill="none" stroke="#333" stroke-width="2.4"/></svg>
<div class="r" style="left:210px;top:646px;width:2570px;height:48px;background:#cecece"></div>
<div class="r" style="left:210px;top:694px;width:2570px;height:2px;background:#b4b4b4"></div>
<div class="r" style="left:1654px;top:646px;width:222px;height:48px;background:#a7bfa6"></div>
<div class="r" style="left:1232px;top:646px;width:2px;height:50px;background:#afafaf"></div>
<div class="r" style="left:1306px;top:646px;width:2px;height:50px;background:#afafaf"></div>
<div class="r" style="left:1502px;top:646px;width:2px;height:50px;background:#afafaf"></div>
<div class="r" style="left:1652px;top:646px;width:2px;height:50px;background:#afafaf"></div>
<div class="r" style="left:1876px;top:646px;width:2px;height:50px;background:#afafaf"></div>
<div class="r" style="left:2099px;top:646px;width:2px;height:50px;background:#afafaf"></div>
<div class="r" style="left:2268px;top:646px;width:2px;height:50px;background:#afafaf"></div>
<div class="r" style="left:2476px;top:646px;width:2px;height:50px;background:#afafaf"></div>
<div class="r" style="left:2548px;top:646px;width:2px;height:50px;background:#afafaf"></div>
<div class="r" style="left:2619px;top:646px;width:2px;height:50px;background:#afafaf"></div>
<div class="r" style="left:2684px;top:646px;width:2px;height:50px;background:#afafaf"></div>
<div class="r" style="left:264px;top:650px;width:40px;height:40px;border:2px solid #e4e4e4;border-radius:2px"></div>
<div class="t" style="left:361.40px;top:640.30px;font-size:26.5px;color:#333;transform:scaleX(0.9899);">7. Пост-продакшн</div>
<div class="t" style="left:1727.60px;top:640.30px;font-size:25.5px;color:#333;">554 347,83</div>
<div class="t" style="left:2015.20px;top:640.30px;font-size:25.5px;color:#333;">56,00</div>
<div class="t" style="left:2197.80px;top:640.30px;font-size:25.5px;color:#333;">0,00</div>
<div class="t" style="left:2328.40px;top:640.30px;font-size:25.5px;color:#333;">554 291,83</div>
<svg style="left:2499px;top:657px" width="24" height="26" viewBox="0 0 24 26"><rect x="1" y="5" width="22" height="20" rx="1.8" fill="none" stroke="#ababab" stroke-width="2"/><rect x="1" y="5" width="22" height="4.5" fill="#ababab"/><rect x="5" y="0.5" width="3.2" height="7" rx="1.6" fill="#cecece" stroke="#ababab" stroke-width="1.4"/><rect x="15.8" y="0.5" width="3.2" height="7" rx="1.6" fill="#cecece" stroke="#ababab" stroke-width="1.4"/></svg>
<svg style="left:2723.8px;top:662.5px" width="20" height="13.8" viewBox="-2 -2 20 13.8"><path d="M0.8 0.8L8.0 9.0L15.2 0.8" fill="none" stroke="#333" stroke-width="2.4"/></svg>
<div class="r" style="left:210px;top:696px;width:2570px;height:48px;background:#cecece"></div>
<div class="r" style="left:210px;top:744px;width:2570px;height:2px;background:#b4b4b4"></div>
<div class="r" style="left:1654px;top:696px;width:222px;height:48px;background:#a7bfa6"></div>
<div class="r" style="left:1232px;top:696px;width:2px;height:50px;background:#afafaf"></div>
<div class="r" style="left:1306px;top:696px;width:2px;height:50px;background:#afafaf"></div>
<div class="r" style="left:1502px;top:696px;width:2px;height:50px;background:#afafaf"></div>
<div class="r" style="left:1652px;top:696px;width:2px;height:50px;background:#afafaf"></div>
<div class="r" style="left:1876px;top:696px;width:2px;height:50px;background:#afafaf"></div>
<div class="r" style="left:2099px;top:696px;width:2px;height:50px;background:#afafaf"></div>
<div class="r" style="left:2268px;top:696px;width:2px;height:50px;background:#afafaf"></div>
<div class="r" style="left:2476px;top:696px;width:2px;height:50px;background:#afafaf"></div>
<div class="r" style="left:2548px;top:696px;width:2px;height:50px;background:#afafaf"></div>
<div class="r" style="left:2619px;top:696px;width:2px;height:50px;background:#afafaf"></div>
<div class="r" style="left:2684px;top:696px;width:2px;height:50px;background:#afafaf"></div>
<div class="r" style="left:264px;top:700px;width:40px;height:40px;border:2px solid #e4e4e4;border-radius:2px"></div>
<div class="t" style="left:361.40px;top:690.30px;font-size:26.5px;color:#333;transform:scaleX(0.9768);">8. Прочие расходы</div>
<div class="t" style="left:1741.80px;top:690.30px;font-size:25.5px;color:#333;">21 739,13</div>
<div class="t" style="left:1965.60px;top:690.30px;font-size:25.5px;color:#333;">18 739,98</div>
<div class="t" style="left:2197.80px;top:690.30px;font-size:25.5px;color:#333;">0,00</div>
<div class="t" style="left:2356.70px;top:690.30px;font-size:25.5px;color:#333;">2 999,15</div>
<svg style="left:2499px;top:707px" width="24" height="26" viewBox="0 0 24 26"><rect x="1" y="5" width="22" height="20" rx="1.8" fill="none" stroke="#ababab" stroke-width="2"/><rect x="1" y="5" width="22" height="4.5" fill="#ababab"/><rect x="5" y="0.5" width="3.2" height="7" rx="1.6" fill="#cecece" stroke="#ababab" stroke-width="1.4"/><rect x="15.8" y="0.5" width="3.2" height="7" rx="1.6" fill="#cecece" stroke="#ababab" stroke-width="1.4"/></svg>
<svg style="left:2723.8px;top:712.5px" width="20" height="13.8" viewBox="-2 -2 20 13.8"><path d="M0.8 0.8L8.0 9.0L15.2 0.8" fill="none" stroke="#333" stroke-width="2.4"/></svg>
<div class="r" style="left:210px;top:746px;width:2570px;height:48px;background:#cecece"></div>
<div class="r" style="left:210px;top:794px;width:2570px;height:2px;background:#b4b4b4"></div>
<div class="r" style="left:1654px;top:746px;width:222px;height:48px;background:#a7bfa6"></div>
<div class="r" style="left:1232px;top:746px;width:2px;height:50px;background:#afafaf"></div>
<div class="r" style="left:1306px;top:746px;width:2px;height:50px;background:#afafaf"></div>
<div class="r" style="left:1502px;top:746px;width:2px;height:50px;background:#afafaf"></div>
<div class="r" style="left:1652px;top:746px;width:2px;height:50px;background:#afafaf"></div>
<div class="r" style="left:1876px;top:746px;width:2px;height:50px;background:#afafaf"></div>
<div class="r" style="left:2099px;top:746px;width:2px;height:50px;background:#afafaf"></div>
<div class="r" style="left:2268px;top:746px;width:2px;height:50px;background:#afafaf"></div>
<div class="r" style="left:2476px;top:746px;width:2px;height:50px;background:#afafaf"></div>
<div class="r" style="left:2548px;top:746px;width:2px;height:50px;background:#afafaf"></div>
<div class="r" style="left:2619px;top:746px;width:2px;height:50px;background:#afafaf"></div>
<div class="r" style="left:2684px;top:746px;width:2px;height:50px;background:#afafaf"></div>
<div class="r" style="left:264px;top:750px;width:40px;height:40px;border:2px solid #e4e4e4;border-radius:2px"></div>
<div class="t" style="left:361.40px;top:740.30px;font-size:26.5px;color:#333;transform:scaleX(0.9754);">9. Объекты ... ИП Карпов</div>
<div class="t" style="left:1805.60px;top:740.30px;font-size:25.5px;color:#333;">0,00</div>
<div class="t" style="left:1951.40px;top:740.30px;font-size:25.5px;color:#333;">130 000,00</div>
<div class="t" style="left:2197.80px;top:740.30px;font-size:25.5px;color:#333;">0,00</div>
<div class="t" style="left:2319.90px;top:740.30px;font-size:25.5px;color:#e54848;">-130 000,00</div>
<svg style="left:2499px;top:757px" width="24" height="26" viewBox="0 0 24 26"><rect x="1" y="5" width="22" height="20" rx="1.8" fill="none" stroke="#ababab" stroke-width="2"/><rect x="1" y="5" width="22" height="4.5" fill="#ababab"/><rect x="5" y="0.5" width="3.2" height="7" rx="1.6" fill="#cecece" stroke="#ababab" stroke-width="1.4"/><rect x="15.8" y="0.5" width="3.2" height="7" rx="1.6" fill="#cecece" stroke="#ababab" stroke-width="1.4"/></svg>
<svg style="left:2723.8px;top:762.5px" width="20" height="13.8" viewBox="-2 -2 20 13.8"><path d="M0.8 0.8L8.0 9.0L15.2 0.8" fill="none" stroke="#333" stroke-width="2.4"/></svg>
<div class="r" style="left:210px;top:796px;width:2570px;height:48px;background:#cecece"></div>
<div class="r" style="left:210px;top:844px;width:2570px;height:2px;background:#b4b4b4"></div>
<div class="r" style="left:1654px;top:796px;width:222px;height:48px;background:#a7bfa6"></div>
<div class="r" style="left:1232px;top:796px;width:2px;height:50px;background:#afafaf"></div>
<div class="r" style="left:1306px;top:796px;width:2px;height:50px;background:#afafaf"></div>
<div class="r" style="left:1502px;top:796px;width:2px;height:50px;background:#afafaf"></div>
<div class="r" style="left:1652px;top:796px;width:2px;height:50px;background:#afafaf"></div>
<div class="r" style="left:1876px;top:796px;width:2px;height:50px;background:#afafaf"></div>
<div class="r" style="left:2099px;top:796px;width:2px;height:50px;background:#afafaf"></div>
<div class="r" style="left:2268px;top:796px;width:2px;height:50px;background:#afafaf"></div>
<div class="r" style="left:2476px;top:796px;width:2px;height:50px;background:#afafaf"></div>
<div class="r" style="left:2548px;top:796px;width:2px;height:50px;background:#afafaf"></div>
<div class="r" style="left:2619px;top:796px;width:2px;height:50px;background:#afafaf"></div>
<div class="r" style="left:2684px;top:796px;width:2px;height:50px;background:#afafaf"></div>
<div class="r" style="left:264px;top:800px;width:40px;height:40px;border:2px solid #e4e4e4;border-radius:2px"></div>
<div class="t" style="left:361.40px;top:790.30px;font-size:26.5px;color:#333;transform:scaleX(0.9835);">10. переработки</div>
<div class="t" style="left:1805.60px;top:790.30px;font-size:25.5px;color:#333;">0,00</div>
<div class="t" style="left:2029.40px;top:790.30px;font-size:25.5px;color:#333;">0,00</div>
<div class="t" style="left:2197.80px;top:790.30px;font-size:25.5px;color:#333;">0,00</div>
<div class="t" style="left:2406.40px;top:790.30px;font-size:25.5px;color:#333;">0,00</div>
<svg style="left:2499px;top:807px" width="24" height="26" viewBox="0 0 24 26"><rect x="1" y="5" width="22" height="20" rx="1.8" fill="none" stroke="#ababab" stroke-width="2"/><rect x="1" y="5" width="22" height="4.5" fill="#ababab"/><rect x="5" y="0.5" width="3.2" height="7" rx="1.6" fill="#cecece" stroke="#ababab" stroke-width="1.4"/><rect x="15.8" y="0.5" width="3.2" height="7" rx="1.6" fill="#cecece" stroke="#ababab" stroke-width="1.4"/></svg>
<svg style="left:2723.8px;top:812.5px" width="20" height="13.8" viewBox="-2 -2 20 13.8"><path d="M0.8 0.8L8.0 9.0L15.2 0.8" fill="none" stroke="#333" stroke-width="2.4"/></svg>
<div class="r" style="left:210px;top:846px;width:2570px;height:48px;background:#cecece"></div>
<div class="r" style="left:210px;top:894px;width:2570px;height:2px;background:#b4b4b4"></div>
<div class="r" style="left:1654px;top:846px;width:222px;height:48px;background:#a7bfa6"></div>
<div class="r" style="left:1232px;top:846px;width:2px;height:50px;background:#afafaf"></div>
<div class="r" style="left:1306px;top:846px;width:2px;height:50px;background:#afafaf"></div>
<div class="r" style="left:1502px;top:846px;width:2px;height:50px;background:#afafaf"></div>
<div class="r" style="left:1652px;top:846px;width:2px;height:50px;background:#afafaf"></div>
<div class="r" style="left:1876px;top:846px;width:2px;height:50px;background:#afafaf"></div>
<div class="r" style="left:2099px;top:846px;width:2px;height:50px;background:#afafaf"></div>
<div class="r" style="left:2268px;top:846px;width:2px;height:50px;background:#afafaf"></div>
<div class="r" style="left:2476px;top:846px;width:2px;height:50px;background:#afafaf"></div>
<div class="r" style="left:2548px;top:846px;width:2px;height:50px;background:#afafaf"></div>
<div class="r" style="left:2619px;top:846px;width:2px;height:50px;background:#afafaf"></div>
<div class="r" style="left:2684px;top:846px;width:2px;height:50px;background:#afafaf"></div>
<div class="r" style="left:264px;top:850px;width:40px;height:40px;border:2px solid #e4e4e4;border-radius:2px"></div>
<div class="t" style="left:361.40px;top:840.30px;font-size:26.5px;color:#333;transform:scaleX(0.9917);">11. Материальные ценности</div>
<div class="t" style="left:1805.60px;top:840.30px;font-size:25.5px;color:#333;">0,00</div>
<div class="t" style="left:1951.40px;top:840.30px;font-size:25.5px;color:#333;">216 581,94</div>
<div class="t" style="left:2197.80px;top:840.30px;font-size:25.5px;color:#333;">0,00</div>
<div class="t" style="left:2319.90px;top:840.30px;font-size:25.5px;color:#e54848;">-216 581,94</div>
<svg style="left:2499px;top:857px" width="24" height="26" viewBox="0 0 24 26"><rect x="1" y="5" width="22" height="20" rx="1.8" fill="none" stroke="#ababab" stroke-width="2"/><rect x="1" y="5" width="22" height="4.5" fill="#ababab"/><rect x="5" y="0.5" width="3.2" height="7" rx="1.6" fill="#cecece" stroke="#ababab" stroke-width="1.4"/><rect x="15.8" y="0.5" width="3.2" height="7" rx="1.6" fill="#cecece" stroke="#ababab" stroke-width="1.4"/></svg>
<svg style="left:2723.8px;top:862.5px" width="20" height="13.8" viewBox="-2 -2 20 13.8"><path d="M0.8 0.8L8.0 9.0L15.2 0.8" fill="none" stroke="#333" stroke-width="2.4"/></svg>
<div class="r" style="left:210px;top:896px;width:2570px;height:48px;background:#cecece"></div>
<div class="r" style="left:210px;top:944px;width:2570px;height:2px;background:#b4b4b4"></div>
<div class="r" style="left:1654px;top:896px;width:222px;height:48px;background:#a7bfa6"></div>
<div class="r" style="left:1232px;top:896px;width:2px;height:50px;background:#afafaf"></div>
<div class="r" style="left:1306px;top:896px;width:2px;height:50px;background:#afafaf"></div>
<div class="r" style="left:1502px;top:896px;width:2px;height:50px;background:#afafaf"></div>
<div class="r" style="left:1652px;top:896px;width:2px;height:50px;background:#afafaf"></div>
<div class="r" style="left:1876px;top:896px;width:2px;height:50px;background:#afafaf"></div>
<div class="r" style="left:2099px;top:896px;width:2px;height:50px;background:#afafaf"></div>
<div class="r" style="left:2268px;top:896px;width:2px;height:50px;background:#afafaf"></div>
<div class="r" style="left:2476px;top:896px;width:2px;height:50px;background:#afafaf"></div>
<div class="r" style="left:2548px;top:896px;width:2px;height:50px;background:#afafaf"></div>
<div class="r" style="left:2619px;top:896px;width:2px;height:50px;background:#afafaf"></div>
<div class="r" style="left:2684px;top:896px;width:2px;height:50px;background:#afafaf"></div>
<svg style="left:222.5px;top:907px" width="25.7" height="23.7" viewBox="0 0 25 23"><path d="M12.5 0l3.5 7.4 8.3.9-6.2 5.6 1.8 8.2-7.4-4.3-7.4 4.3 1.8-8.2L.7 8.3 9 7.4z" fill="#2e2e2e"/></svg>
<div class="r" style="left:264px;top:900px;width:40px;height:40px;border:2px solid #e4e4e4;border-radius:2px"></div>
<div class="t" style="left:361.40px;top:890.30px;font-size:26.5px;color:#333;transform:scaleX(0.9689);">12. Общестудийные расходы (10%)</div>
<div class="t" style="left:1805.60px;top:890.30px;font-size:25.5px;color:#333;">0,00</div>
<div class="t" style="left:1979.70px;top:890.30px;font-size:25.5px;color:#333;">6 555,00</div>
<div class="t" style="left:2197.80px;top:890.30px;font-size:25.5px;color:#333;">0,00</div>
<div class="t" style="left:2348.30px;top:890.30px;font-size:25.5px;color:#e54848;">-6 555,00</div>
<svg style="left:2499px;top:907px" width="24" height="26" viewBox="0 0 24 26"><rect x="1" y="5" width="22" height="20" rx="1.8" fill="none" stroke="#ababab" stroke-width="2"/><rect x="1" y="5" width="22" height="4.5" fill="#ababab"/><rect x="5" y="0.5" width="3.2" height="7" rx="1.6" fill="#cecece" stroke="#ababab" stroke-width="1.4"/><rect x="15.8" y="0.5" width="3.2" height="7" rx="1.6" fill="#cecece" stroke="#ababab" stroke-width="1.4"/></svg>
<svg style="left:2723.8px;top:912.5px" width="20" height="13.8" viewBox="-2 -2 20 13.8"><path d="M0.8 0.8L8.0 9.0L15.2 0.8" fill="none" stroke="#333" stroke-width="2.4"/></svg>
<div class="r" style="left:210px;top:946px;width:2570px;height:48px;background:#cecece"></div>
<div class="r" style="left:210px;top:994px;width:2570px;height:2px;background:#b4b4b4"></div>
<div class="r" style="left:1654px;top:946px;width:222px;height:48px;background:#a7bfa6"></div>
<div class="r" style="left:1232px;top:946px;width:2px;height:50px;background:#afafaf"></div>
<div class="r" style="left:1306px;top:946px;width:2px;height:50px;background:#afafaf"></div>
<div class="r" style="left:1502px;top:946px;width:2px;height:50px;background:#afafaf"></div>
<div class="r" style="left:1652px;top:946px;width:2px;height:50px;background:#afafaf"></div>
<div class="r" style="left:1876px;top:946px;width:2px;height:50px;background:#afafaf"></div>
<div class="r" style="left:2099px;top:946px;width:2px;height:50px;background:#afafaf"></div>
<div class="r" style="left:2268px;top:946px;width:2px;height:50px;background:#afafaf"></div>
<div class="r" style="left:2476px;top:946px;width:2px;height:50px;background:#afafaf"></div>
<div class="r" style="left:2548px;top:946px;width:2px;height:50px;background:#afafaf"></div>
<div class="r" style="left:2619px;top:946px;width:2px;height:50px;background:#afafaf"></div>
<div class="r" style="left:2684px;top:946px;width:2px;height:50px;background:#afafaf"></div>
<div class="r" style="left:264px;top:950px;width:40px;height:40px;border:2px solid #e4e4e4;border-radius:2px"></div>
<div class="t" style="left:361.40px;top:940.30px;font-size:26.5px;color:#333;transform:scaleX(0.9879);">13. Добавка 50 млн</div>
<div class="t" style="left:1805.60px;top:940.30px;font-size:25.5px;color:#333;">0,00</div>
<div class="t" style="left:2029.40px;top:940.30px;font-size:25.5px;color:#333;">0,00</div>
<div class="t" style="left:2197.80px;top:940.30px;font-size:25.5px;color:#333;">0,00</div>
<div class="t" style="left:2406.40px;top:940.30px;font-size:25.5px;color:#333;">0,00</div>
<svg style="left:2499px;top:957px" width="24" height="26" viewBox="0 0 24 26"><rect x="1" y="5" width="22" height="20" rx="1.8" fill="none" stroke="#ababab" stroke-width="2"/><rect x="1" y="5" width="22" height="4.5" fill="#ababab"/><rect x="5" y="0.5" width="3.2" height="7" rx="1.6" fill="#cecece" stroke="#ababab" stroke-width="1.4"/><rect x="15.8" y="0.5" width="3.2" height="7" rx="1.6" fill="#cecece" stroke="#ababab" stroke-width="1.4"/></svg>
<svg style="left:2723.8px;top:962.5px" width="20" height="13.8" viewBox="-2 -2 20 13.8"><path d="M0.8 0.8L8.0 9.0L15.2 0.8" fill="none" stroke="#333" stroke-width="2.4"/></svg>
<div class="r" style="left:210px;top:996px;width:2570px;height:48px;background:#cecece"></div>
<div class="r" style="left:210px;top:1044px;width:2570px;height:2px;background:#b4b4b4"></div>
<div class="r" style="left:1654px;top:996px;width:222px;height:48px;background:#a7bfa6"></div>
<div class="r" style="left:1232px;top:996px;width:2px;height:50px;background:#afafaf"></div>
<div class="r" style="left:1306px;top:996px;width:2px;height:50px;background:#afafaf"></div>
<div class="r" style="left:1502px;top:996px;width:2px;height:50px;background:#afafaf"></div>
<div class="r" style="left:1652px;top:996px;width:2px;height:50px;background:#afafaf"></div>
<div class="r" style="left:1876px;top:996px;width:2px;height:50px;background:#afafaf"></div>
<div class="r" style="left:2099px;top:996px;width:2px;height:50px;background:#afafaf"></div>
<div class="r" style="left:2268px;top:996px;width:2px;height:50px;background:#afafaf"></div>
<div class="r" style="left:2476px;top:996px;width:2px;height:50px;background:#afafaf"></div>
<div class="r" style="left:2548px;top:996px;width:2px;height:50px;background:#afafaf"></div>
<div class="r" style="left:2619px;top:996px;width:2px;height:50px;background:#afafaf"></div>
<div class="r" style="left:2684px;top:996px;width:2px;height:50px;background:#afafaf"></div>
<div class="t" style="left:361.40px;top:990.30px;font-size:26.5px;color:#333;transform:scaleX(1.0043);">Финкомиссия и налоги</div>
<div class="t" style="left:2148.10px;top:990.30px;font-size:25.5px;color:#333;">2 000,00</div>
<div class="r" style="left:210px;top:1046px;width:2570px;height:48px;background:#cecece"></div>
<div class="r" style="left:210px;top:1094px;width:2570px;height:2px;background:#b4b4b4"></div>
<div class="r" style="left:1654px;top:1046px;width:222px;height:48px;background:#a7bfa6"></div>
<div class="r" style="left:1232px;top:1046px;width:2px;height:50px;background:#afafaf"></div>
<div class="r" style="left:1306px;top:1046px;width:2px;height:50px;background:#afafaf"></div>
<div class="r" style="left:1502px;top:1046px;width:2px;height:50px;background:#afafaf"></div>
<div class="r" style="left:1652px;top:1046px;width:2px;height:50px;background:#afafaf"></div>
<div class="r" style="left:1876px;top:1046px;width:2px;height:50px;background:#afafaf"></div>
<div class="r" style="left:2099px;top:1046px;width:2px;height:50px;background:#afafaf"></div>
<div class="r" style="left:2268px;top:1046px;width:2px;height:50px;background:#afafaf"></div>
<div class="r" style="left:2476px;top:1046px;width:2px;height:50px;background:#afafaf"></div>
<div class="r" style="left:2548px;top:1046px;width:2px;height:50px;background:#afafaf"></div>
<div class="r" style="left:2619px;top:1046px;width:2px;height:50px;background:#afafaf"></div>
<div class="r" style="left:2684px;top:1046px;width:2px;height:50px;background:#afafaf"></div>
<div class="t" style="left:361.40px;top:1040.30px;font-size:26.5px;color:#333;transform:scaleX(0.9880);">Под отчетом (без статей)</div>
<div class="t" style="left:2197.80px;top:1040.30px;font-size:25.5px;color:#333;">0,00</div>
<div class="r" style="left:210px;top:1096px;width:2570px;height:48px;background:#3c3c3c"></div>
<div class="r" style="left:210px;top:1144px;width:2570px;height:2px;background:#8a8a8a"></div>
<div class="r" style="left:1654px;top:1096px;width:222px;height:48px;background:#172c14"></div>
<div class="r" style="left:1232px;top:1096px;width:2px;height:50px;background:#8c8c8c"></div>
<div class="r" style="left:1306px;top:1096px;width:2px;height:50px;background:#8c8c8c"></div>
<div class="r" style="left:1502px;top:1096px;width:2px;height:50px;background:#8c8c8c"></div>
<div class="r" style="left:1652px;top:1096px;width:2px;height:50px;background:#8c8c8c"></div>
<div class="r" style="left:1876px;top:1096px;width:2px;height:50px;background:#8c8c8c"></div>
<div class="r" style="left:2099px;top:1096px;width:2px;height:50px;background:#8c8c8c"></div>
<div class="r" style="left:2268px;top:1096px;width:2px;height:50px;background:#8c8c8c"></div>
<div class="r" style="left:2476px;top:1096px;width:2px;height:50px;background:#8c8c8c"></div>
<div class="r" style="left:2548px;top:1096px;width:2px;height:50px;background:#8c8c8c"></div>
<div class="r" style="left:2619px;top:1096px;width:2px;height:50px;background:#8c8c8c"></div>
<div class="r" style="left:2684px;top:1096px;width:2px;height:50px;background:#8c8c8c"></div>
<div class="t" style="left:380.30px;top:1088.80px;font-size:28.3px;font-weight:bold;-webkit-text-stroke:0;color:#fff;transform:scaleX(0.9190);">Итого по смете:</div>
<div class="t" style="left:1681.10px;top:1089.80px;font-size:27.3px;font-weight:bold;-webkit-text-stroke:0;color:#fff;">26 490 669,48</div>
<div class="t" style="left:1904.90px;top:1089.80px;font-size:27.3px;font-weight:bold;-webkit-text-stroke:0;color:#fff;">23 315 402,96</div>
<div class="t" style="left:2126.50px;top:1089.80px;font-size:27.3px;font-weight:bold;-webkit-text-stroke:0;color:#fff;">60 155,00</div>
<div class="t" style="left:2297.10px;top:1089.80px;font-size:27.3px;font-weight:bold;-webkit-text-stroke:0;color:#fff;">3 175 266,52</div>
<div class="r" style="left:210px;top:1146px;width:2570px;height:48px;background:#cecece"></div>
<div class="r" style="left:210px;top:1194px;width:2570px;height:2px;background:#b4b4b4"></div>
<div class="r" style="left:1654px;top:1146px;width:222px;height:48px;background:#a7bfa6"></div>
<div class="r" style="left:1232px;top:1146px;width:2px;height:50px;background:#afafaf"></div>
<div class="r" style="left:1306px;top:1146px;width:2px;height:50px;background:#afafaf"></div>
<div class="r" style="left:1502px;top:1146px;width:2px;height:50px;background:#afafaf"></div>
<div class="r" style="left:1652px;top:1146px;width:2px;height:50px;background:#afafaf"></div>
<div class="r" style="left:1876px;top:1146px;width:2px;height:50px;background:#afafaf"></div>
<div class="r" style="left:2099px;top:1146px;width:2px;height:50px;background:#afafaf"></div>
<div class="r" style="left:2268px;top:1146px;width:2px;height:50px;background:#afafaf"></div>
<div class="r" style="left:2476px;top:1146px;width:2px;height:50px;background:#afafaf"></div>
<div class="r" style="left:2548px;top:1146px;width:2px;height:50px;background:#afafaf"></div>
<div class="r" style="left:2619px;top:1146px;width:2px;height:50px;background:#afafaf"></div>
<div class="r" style="left:2684px;top:1146px;width:2px;height:50px;background:#afafaf"></div>
<div class="t" style="left:404.79px;top:1140.30px;font-size:26.5px;transform:scaleX(0.9842);color:#333;">Непредвиденные расходы (3%) ... неизвестный</div>
<div class="t" style="left:1805.60px;top:1140.30px;font-size:25.5px;color:#333;">0,00</div>
<div class="t" style="left:2029.40px;top:1140.30px;font-size:25.5px;color:#333;">0,00</div>
<div class="t" style="left:2197.80px;top:1140.30px;font-size:25.5px;color:#333;">0,00</div>
<div class="t" style="left:2406.40px;top:1140.30px;font-size:25.5px;color:#333;">0,00</div>
<svg style="left:2499px;top:1157px" width="24" height="26" viewBox="0 0 24 26"><rect x="1" y="5" width="22" height="20" rx="1.8" fill="none" stroke="#ababab" stroke-width="2"/><rect x="1" y="5" width="22" height="4.5" fill="#ababab"/><rect x="5" y="0.5" width="3.2" height="7" rx="1.6" fill="#cecece" stroke="#ababab" stroke-width="1.4"/><rect x="15.8" y="0.5" width="3.2" height="7" rx="1.6" fill="#cecece" stroke="#ababab" stroke-width="1.4"/></svg>
<svg style="left:2723.8px;top:1162.5px" width="20" height="13.8" viewBox="-2 -2 20 13.8"><path d="M0.8 0.8L8.0 9.0L15.2 0.8" fill="none" stroke="#333" stroke-width="2.4"/></svg>
<div class="r" style="left:210px;top:1196px;width:2570px;height:48px;background:#cecece"></div>
<div class="r" style="left:210px;top:1244px;width:2570px;height:2px;background:#b4b4b4"></div>
<div class="r" style="left:1654px;top:1196px;width:222px;height:48px;background:#a7bfa6"></div>
<div class="r" style="left:1232px;top:1196px;width:2px;height:50px;background:#afafaf"></div>
<div class="r" style="left:1306px;top:1196px;width:2px;height:50px;background:#afafaf"></div>
<div class="r" style="left:1502px;top:1196px;width:2px;height:50px;background:#afafaf"></div>
<div class="r" style="left:1652px;top:1196px;width:2px;height:50px;background:#afafaf"></div>
<div class="r" style="left:1876px;top:1196px;width:2px;height:50px;background:#afafaf"></div>
<div class="r" style="left:2099px;top:1196px;width:2px;height:50px;background:#afafaf"></div>
<div class="r" style="left:2268px;top:1196px;width:2px;height:50px;background:#afafaf"></div>
<div class="r" style="left:2476px;top:1196px;width:2px;height:50px;background:#afafaf"></div>
<div class="r" style="left:2548px;top:1196px;width:2px;height:50px;background:#afafaf"></div>
<div class="r" style="left:2619px;top:1196px;width:2px;height:50px;background:#afafaf"></div>
<div class="r" style="left:2684px;top:1196px;width:2px;height:50px;background:#afafaf"></div>
<div class="t" style="left:361.40px;top:1190.30px;font-size:26.5px;color:#333;">НДС</div>
<div class="t" style="left:1332.50px;top:1190.30px;font-size:25.5px;color:#333;">2 442 581,58</div>
<div class="t" style="left:1706.30px;top:1190.30px;font-size:25.5px;color:#333;">2 654 979,97</div>
<div class="t" style="left:2029.40px;top:1190.30px;font-size:25.5px;color:#333;">0,00</div>
<div class="t" style="left:2197.80px;top:1190.30px;font-size:25.5px;color:#333;">0,00</div>
<div class="t" style="left:2307.10px;top:1190.30px;font-size:25.5px;color:#333;">2 654 979,97</div>
<svg style="left:2499px;top:1207px" width="24" height="26" viewBox="0 0 24 26"><rect x="1" y="5" width="22" height="20" rx="1.8" fill="none" stroke="#ababab" stroke-width="2"/><rect x="1" y="5" width="22" height="4.5" fill="#ababab"/><rect x="5" y="0.5" width="3.2" height="7" rx="1.6" fill="#cecece" stroke="#ababab" stroke-width="1.4"/><rect x="15.8" y="0.5" width="3.2" height="7" rx="1.6" fill="#cecece" stroke="#ababab" stroke-width="1.4"/></svg>
<svg style="left:2723.8px;top:1212.5px" width="20" height="13.8" viewBox="-2 -2 20 13.8"><path d="M0.8 0.8L8.0 9.0L15.2 0.8" fill="none" stroke="#333" stroke-width="2.4"/></svg>
<div class="r" style="left:210px;top:1246px;width:2570px;height:48px;background:#3c3c3c"></div>
<div class="r" style="left:210px;top:1294px;width:2570px;height:2px;background:#8a8a8a"></div>
<div class="r" style="left:1654px;top:1246px;width:222px;height:48px;background:#172c14"></div>
<div class="r" style="left:1232px;top:1246px;width:2px;height:50px;background:#8c8c8c"></div>
<div class="r" style="left:1306px;top:1246px;width:2px;height:50px;background:#8c8c8c"></div>
<div class="r" style="left:1502px;top:1246px;width:2px;height:50px;background:#8c8c8c"></div>
<div class="r" style="left:1652px;top:1246px;width:2px;height:50px;background:#8c8c8c"></div>
<div class="r" style="left:1876px;top:1246px;width:2px;height:50px;background:#8c8c8c"></div>
<div class="r" style="left:2099px;top:1246px;width:2px;height:50px;background:#8c8c8c"></div>
<div class="r" style="left:2268px;top:1246px;width:2px;height:50px;background:#8c8c8c"></div>
<div class="r" style="left:2476px;top:1246px;width:2px;height:50px;background:#8c8c8c"></div>
<div class="r" style="left:2548px;top:1246px;width:2px;height:50px;background:#8c8c8c"></div>
<div class="r" style="left:2619px;top:1246px;width:2px;height:50px;background:#8c8c8c"></div>
<div class="r" style="left:2684px;top:1246px;width:2px;height:50px;background:#8c8c8c"></div>
<div class="t" style="left:380.30px;top:1238.80px;font-size:28.3px;font-weight:bold;-webkit-text-stroke:0;color:#fff;transform:scaleX(0.9200);">Итого:</div>
<div class="t" style="left:1681.10px;top:1239.80px;font-size:27.3px;font-weight:bold;-webkit-text-stroke:0;color:#fff;">29 145 649,45</div>
<div class="t" style="left:1904.90px;top:1239.80px;font-size:27.3px;font-weight:bold;-webkit-text-stroke:0;color:#fff;">23 315 402,96</div>
<div class="t" style="left:2126.50px;top:1239.80px;font-size:27.3px;font-weight:bold;-webkit-text-stroke:0;color:#fff;">60 155,00</div>
<div class="t" style="left:2297.10px;top:1239.80px;font-size:27.3px;font-weight:bold;-webkit-text-stroke:0;color:#fff;">5 830 246,49</div>
<div class="r" style="left:210px;top:1296px;width:2570px;height:48px;background:#e9e9e9"></div>
<div class="r" style="left:1654px;top:1296px;width:222px;height:48px;background:#a7bfa6"></div>
<div class="r" style="left:1232px;top:1296px;width:2px;height:48px;background:#d0d0d0"></div>
<div class="r" style="left:1306px;top:1296px;width:2px;height:48px;background:#d0d0d0"></div>
<div class="r" style="left:1502px;top:1296px;width:2px;height:48px;background:#d0d0d0"></div>
<div class="r" style="left:1652px;top:1296px;width:2px;height:48px;background:#d0d0d0"></div>
<div class="r" style="left:1876px;top:1296px;width:2px;height:48px;background:#d0d0d0"></div>
<div class="r" style="left:2099px;top:1296px;width:2px;height:48px;background:#d0d0d0"></div>
<div class="r" style="left:2268px;top:1296px;width:2px;height:48px;background:#d0d0d0"></div>
<div class="r" style="left:2476px;top:1296px;width:2px;height:48px;background:#d0d0d0"></div>
<div class="r" style="left:2548px;top:1296px;width:2px;height:48px;background:#d0d0d0"></div>
<div class="r" style="left:2619px;top:1296px;width:2px;height:48px;background:#d0d0d0"></div>
<div class="r" style="left:2684px;top:1296px;width:2px;height:48px;background:#d0d0d0"></div>
<div class="t" style="left:380.23px;top:1290.30px;font-size:27.5px;transform:scaleX(1.0080);color:#333;">Итого на серию:</div>
<div class="t" style="left:1694.60px;top:1290.30px;font-size:27.5px;color:#333;">2 914 564,95</div>
<div class="t" style="left:1918.40px;top:1290.30px;font-size:27.5px;color:#333;">2 331 540,30</div>
<div class="t" style="left:2140.40px;top:1290.30px;font-size:27.5px;color:#333;">6 015,50</div>
<div class="t" style="left:2318.40px;top:1290.30px;font-size:27.5px;color:#333;">583 024,65</div>
<div class="r" style="left:1298px;top:288px;width:8px;height:1056px;background:#c9c9c9"></div>
<div class="r" style="left:140px;top:1119px;width:346px;height:304px;background:#fff;box-shadow:0 6px 22px rgba(0,0,0,0.30)"></div>
<div class="r" style="left:142px;top:1361px;width:342px;height:60px;background:#268a3b"></div>
<div class="t" style="left:193.50px;top:1119.00px;font-size:26.5px;color:#0b8023;transform:scaleX(0.9759);">Параметры</div>
<svg style="left:172px;top:1142.8px" width="9" height="15" viewBox="0 0 9 15"><path d="M0 0L8.5 7.5L0 15z" fill="#0b8023"/></svg>
<div class="t" style="left:192.80px;top:1178.70px;font-size:26.5px;color:#0b8023;transform:scaleX(0.9977);">Ставки финкомиссии</div>
<svg style="left:172px;top:1202.5px" width="9" height="15" viewBox="0 0 9 15"><path d="M0 0L8.5 7.5L0 15z" fill="#0b8023"/></svg>
<div class="t" style="left:192.50px;top:1238.80px;font-size:26.5px;color:#0b8023;transform:scaleX(0.9850);">Типы ведомостей</div>
<svg style="left:172px;top:1262.6px" width="9" height="15" viewBox="0 0 9 15"><path d="M0 0L8.5 7.5L0 15z" fill="#0b8023"/></svg>
<div class="t" style="left:192.80px;top:1298.80px;font-size:26.5px;color:#0b8023;transform:scaleX(0.9944);">Список тегов</div>
<svg style="left:172px;top:1322.6px" width="9" height="15" viewBox="0 0 9 15"><path d="M0 0L8.5 7.5L0 15z" fill="#0b8023"/></svg>
<div class="t" style="left:192.10px;top:1359.00px;font-size:26.5px;color:#fff;transform:scaleX(0.9742);">Тарифы и платежи</div>
<svg style="left:172px;top:1382.8px" width="9" height="15" viewBox="0 0 9 15"><path d="M0 0L8.5 7.5L0 15z" fill="#fff"/></svg>
<svg style="left:500px;top:1354px" width="156" height="78" viewBox="500 1354 156 78"><path d="M529.5 1356.2H584L556.4 1393.4L584 1430.2H529.3L501.8 1393.4z M598.1 1356.2H626L598.9 1393.4L626 1430.2H598.1L570.6 1393.4z M640.1 1356.2H654L626.8 1393.4L654 1430.2H640.1L612.6 1393.4z" fill="#e32322"/></svg>
</div></body></html>
